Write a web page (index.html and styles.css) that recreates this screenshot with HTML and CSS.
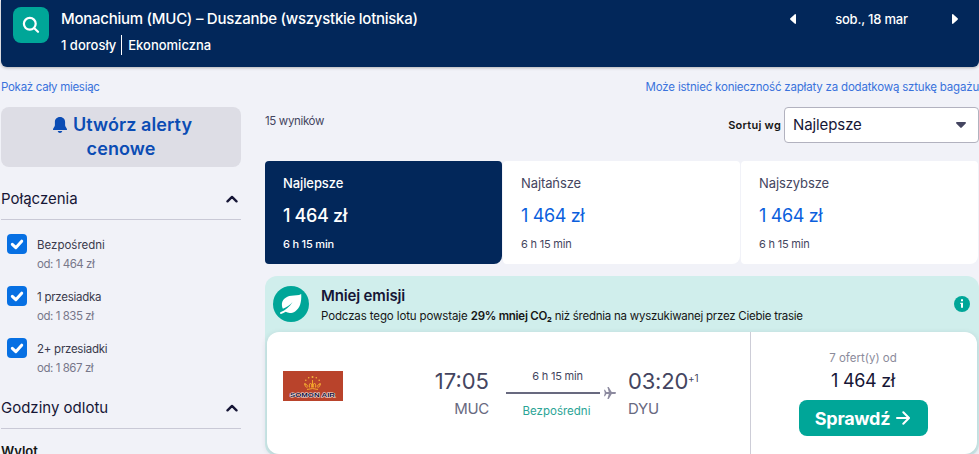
FILE: index.html
```html
<!DOCTYPE html>
<html lang="pl">
<head>
  <meta charset="UTF-8" />
  <title>Monachium – Duszanbe</title>
  <link rel="stylesheet" href="styles.css">
</head>
<body>
  <header class="search-bar">
    <button class="search-btn" aria-label="Szukaj">
      <svg width="18" height="18" viewBox="0 0 18 18" fill="none" stroke="#fff" stroke-width="2.2" stroke-linecap="round"><circle cx="7.8" cy="7.8" r="5.9"/><path d="M12.3 12.3L16 15.8"/></svg>
    </button>
    <div class="search-info">
      <div class="route">Monachium (MUC) – Duszanbe (wszystkie lotniska)</div>
      <div class="details"><span>1 dorosły</span><span class="cabin">Ekonomiczna</span></div>
    </div>
    <div class="date-nav">
      <svg width="6" height="10" viewBox="0 0 6 10" fill="#fff"><path d="M6 1v8c0 .8-.8 1.200-1.400.6L.4 5.700a1 1 0 0 1 0-1.400L4.600.4C5.200-.2 6 .2 6 1z"/></svg>
      <span class="date">sob., 18 mar</span>
      <svg width="6" height="10" viewBox="0 0 6 10" fill="#fff"><path d="M0 1v8c0 .8.8 1.200 1.400.6l4.200-3.900a1 1 0 0 0 0-1.400L1.400.4C.8-.2 0 .2 0 1z"/></svg>
    </div>
  </header>

  <div class="links">
    <a class="link-month">Pokaż cały miesiąc</a>
    <a class="link-bags">Może istnieć konieczność zapłaty za dodatkową sztukę bagażu</a>
  </div>

  <div class="content">
    <aside class="sidebar">
      <button class="alert-btn">
        <span class="alert-line"><svg width="14" height="16" viewBox="0 0 14 16" fill="#0b4cb4"><path d="M7 0C3.700 0 1.900 2.400 1.900 5v3.200c0 1.300-1.600 2.400-1.900 4.100-.1.500.2.700.6.700h12.800c.4 0 .7-.2.600-.7-.3-1.700-1.900-2.800-1.900-4.100V5c0-2.600-1.800-5-5.100-5zM4.700 14c.3 1.200 1.200 2 2.300 2s2-.8 2.300-2z"/></svg>Utwórz alerty</span>
        <span>cenowe</span>
      </button>

      <div class="filter-head first">
        <span>Połączenia</span>
        <svg width="12" height="8" viewBox="0 0 12 8" fill="none" stroke="#161636" stroke-width="2.400" stroke-linecap="round" stroke-linejoin="round"><path d="M1.500 6.300L6 1.900l4.500 4.400"/></svg>
      </div>
      <div class="options">
        <div class="option">
          <span class="check"><svg width="20" height="20" viewBox="0 0 20 20" fill="none" stroke="#fff" stroke-width="3" stroke-linecap="round" stroke-linejoin="round"><path d="M5.300 10.300l3.500 3.400 5.900-6.500"/></svg></span>
          <div><div class="opt-name">Bezpośredni</div><div class="opt-price">od: 1 464 zł</div></div>
        </div>
        <div class="option">
          <span class="check"><svg width="20" height="20" viewBox="0 0 20 20" fill="none" stroke="#fff" stroke-width="3" stroke-linecap="round" stroke-linejoin="round"><path d="M5.300 10.300l3.500 3.400 5.900-6.500"/></svg></span>
          <div><div class="opt-name tight">1 przesiadka</div><div class="opt-price">od: 1 835 zł</div></div>
        </div>
        <div class="option">
          <span class="check"><svg width="20" height="20" viewBox="0 0 20 20" fill="none" stroke="#fff" stroke-width="3" stroke-linecap="round" stroke-linejoin="round"><path d="M5.300 10.300l3.500 3.400 5.900-6.500"/></svg></span>
          <div><div class="opt-name tight">2+ przesiadki</div><div class="opt-price">od: 1 867 zł</div></div>
        </div>
      </div>
      <div class="filter-head">
        <span>Godziny odlotu</span>
        <svg width="12" height="8" viewBox="0 0 12 8" fill="none" stroke="#161636" stroke-width="2.400" stroke-linecap="round" stroke-linejoin="round"><path d="M1.500 6.300L6 1.900l4.500 4.400"/></svg>
      </div>
      <div class="subhead">Wylot</div>
    </aside>

    <main class="results">
      <div class="sort-row">
        <span class="count">15 wyników</span>
        <span class="sort-label">Sortuj wg</span>
        <div class="select">
          <span>Najlepsze</span>
          <svg width="10" height="6" viewBox="0 0 10 6" fill="#444560"><path d="M1 0h8c.9 0 1.300.8.700 1.400L5.700 5.600a1 1 0 0 1-1.400 0L.3 1.400C-.3.800.1 0 1 0z"/></svg>
        </div>
      </div>

      <div class="tabs">
        <div class="tab active"><div class="tab-name">Najlepsze</div><div class="tab-price">1 464 zł</div><div class="tab-time">6 h 15 min</div></div>
        <div class="tab"><div class="tab-name">Najtańsze</div><div class="tab-price">1 464 zł</div><div class="tab-time">6 h 15 min</div></div>
        <div class="tab"><div class="tab-name">Najszybsze</div><div class="tab-price">1 464 zł</div><div class="tab-time">6 h 15 min</div></div>
      </div>

      <section class="eco">
        <div class="eco-head">
          <svg width="36" height="36" viewBox="0 0 36 36"><circle cx="18" cy="18" r="18" fill="#00a698"/><path d="M28.200 8.100c-2.600 1.700-6.300 1.200-9.900 1.600C12.600 10.300 8.700 14 8.900 19c0 1.400.4 2.700 1 3.800 3.700-1.500 7-3.800 9.700-6.900-2.700 4.500-7 8.200-12.200 10.400-.7.500-.4 1.700.6 1.600 1.700-.4 3.200-1.200 4.700-2.100 2.400 1.600 6.300 1.500 9.400-.4 4.800-3 6.600-9 6.100-17.300z" fill="#fff"/></svg>
          <div class="eco-text">
            <div class="eco-title">Mniej emisji</div>
            <div class="eco-desc"><span>Podczas tego lotu powstaje </span><b>29% mniej CO₂</b><span class="tight"> niż średnia na wyszukiwanej przez Ciebie trasie</span></div>
          </div>
          <svg class="info" width="16" height="16" viewBox="0 0 16 16"><circle cx="8" cy="8" r="8" fill="#00a698"/><path d="M7 3.200h2v2H7zM6.300 6.800H9v5H7V8h-.7z" fill="#fff"/></svg>
        </div>
        <div class="ticket">
          <div class="flight">
            <div class="airline">
              <svg viewBox="0 0 60 30" width="60" height="30">
                <rect width="60" height="30" fill="#b9432b"/>
                <g fill="none" stroke="#f2a32b" stroke-width="1"><path d="M24 18.500q5.500-2 11 0M24.500 16.800q-3.500-1.500-2.500-4 2 .3 3 3M34.500 16.800q3.500-1.500 2.500-4-2 .3-3 3M26.500 16.500q-1-3 1-4.500 2 1.800 1 4.500M32.500 16.500q1-3-1-4.500-2 1.800-1 4.500M29.500 9v7.500"/></g>
                <g fill="#f5b53b"><circle cx="29.500" cy="6" r="1"/><circle cx="25.700" cy="6.800" r=".8"/><circle cx="33.300" cy="6.800" r=".8"/><circle cx="22.800" cy="9.300" r=".8"/><circle cx="36.200" cy="9.300" r=".8"/><circle cx="21.800" cy="13" r=".8"/><circle cx="37.200" cy="13" r=".8"/></g>
                <text class="logo-text" x="7" y="26" textLength="45" lengthAdjust="spacingAndGlyphs">SOMON AIR</text>
              </svg>
            </div>
            <div class="leg from"><div class="time">17:05</div><div class="code">MUC</div></div>
            <div class="path">
              <div class="duration">6 h 15 min</div>
              <div class="line-row"><span class="line"></span><svg width="12" height="12" viewBox="0 0 12 12" fill="#8c8a9f"><path d="M0 2.700h1l1.400 2.400h2.400L3.400 0h1.300l3 5.100h3.200c.6 0 1.100.4 1.100.9s-.5.900-1.100.9H7.700l-3 5.100H3.400l1.400-5.100H2.400L1 9.300H0L.8 6z"/></svg></div>
              <div class="direct">Bezpośredni</div>
            </div>
            <div class="leg to"><div class="time">03:20<span class="plus">+1</span></div><div class="code">DYU</div></div>
          </div>
          <div class="offer">
            <div class="offers">7 ofert(y) od</div>
            <div class="price">1 464 zł</div>
            <button class="go"><span>Sprawdź</span><svg width="14" height="14" viewBox="0 0 14 14" fill="none" stroke="#fff" stroke-width="2" stroke-linecap="round" stroke-linejoin="round"><path d="M1 7h11.500M7.300 1.200L13 7l-5.700 5.800"/></svg></button>
          </div>
        </div>
      </section>
    </main>
  </div>
</body>
</html>
```
FILE: styles.css
```css
* {
  box-sizing: border-box;
}
body {
  margin: 0;
  height: 454px;
  overflow: hidden;
  background: #f1f2f8;
  color: #161616;
  font-family: Inter, "Liberation Sans", sans-serif;
  font-size: 12px;
  line-height: 16px;
  white-space: nowrap;
}
button {
  border: 0;
  padding: 0;
  font-family: inherit;
}
svg {
  display: block;
  flex: none;
}
.search-bar {
  display: flex;
  height: 67px;
  margin-left: 1px;
  padding: 7px 21px 0 12px;
  background: #02275a;
  color: #fff;
  border-radius: 0 0 6px 6px;
  box-shadow: 0 1px 3px rgba(37, 32, 31, .3);
}
.search-btn {
  display: flex;
  align-items: center;
  justify-content: center;
  width: 36px;
  height: 36px;
  border-radius: 8px;
  background: #00a698;
}
.search-info {
  margin-left: 12px;
  font-weight: 500;
}
.route {
  font-size: 15px;
  line-height: 24px;
  letter-spacing: -.26px;
}
.details {
  display: flex;
  align-items: center;
  margin-top: 4px;
  font-size: 13px;
  line-height: 20px;
}
.cabin {
  margin-left: 5px;
  padding-left: 6px;
  border-left: 1px solid #fff;
}
.date-nav {
  display: flex;
  align-items: center;
  justify-content: space-between;
  width: 168px;
  height: 24px;
  margin-left: auto;
  font-size: 13px;
  font-weight: 500;
}
.date {
  letter-spacing: -.2px;
  margin-right: 5px;
}
.links {
  display: flex;
  justify-content: space-between;
  height: 40px;
  padding: 12px 0 0 1px;
  color: #3a72dc;
  font-size: 11.500px;
}
.link-month {
  letter-spacing: -.28px;
}
.link-bags {
  letter-spacing: -.19px;
}
.content {
  display: flex;
  gap: 24px;
  padding-left: 1px;
}
.sidebar {
  width: 240px;
  flex: none;
}
.alert-btn {
  display: flex;
  flex-direction: column;
  align-items: center;
  justify-content: center;
  width: 240px;
  height: 60px;
  border-radius: 8px;
  background: #dddde5;
  color: #0b4cb4;
  font-size: 18px;
  font-weight: 600;
  line-height: 24px;
  letter-spacing: .08px;
}
.alert-line {
  display: flex;
  align-items: center;
  gap: 6px;
  padding-left: 3px;
}
.filter-head {
  display: flex;
  align-items: center;
  justify-content: space-between;
  height: 42px;
  padding-right: 3px;
  border-bottom: 1px solid #c9c9d6;
  color: #161636;
  font-size: 15px;
}
.filter-head.first {
  margin-top: 11px;
}
.options {
  display: flex;
  flex-direction: column;
  gap: 12px;
  height: 167px;
  padding: 14px 0 0 6px;
}
.option {
  display: flex;
  gap: 10px;
  height: 40px;
}
.check {
  width: 20px;
  height: 20px;
  flex: none;
  border-radius: 4px;
  background: #0770e3;
}
.opt-name {
  margin-top: 2px;
  line-height: 18px;
  font-size: 11.500px;
  color: #3a3a4c;
}
.tight {
  letter-spacing: -.25px;
}
.opt-price {
  line-height: 20px;
  font-size: 11.500px;
  letter-spacing: -.45px;
  color: #77778a;
}
.subhead {
  margin-top: 12px;
  line-height: 20px;
  font-size: 13px;
  font-weight: 600;
}
.results {
  width: 714px;
}
.sort-row {
  display: flex;
  height: 36px;
  align-items: center;
}
.count {
  align-self: flex-start;
  margin-top: 6px;
  font-size: 11.500px;
  letter-spacing: -.35px;
  color: #444560;
}
.sort-label {
  margin-left: auto;
  margin-right: 3px;
  font-size: 11px;
  font-weight: 600;
  letter-spacing: .24px;
}
.select {
  display: flex;
  align-items: center;
  justify-content: space-between;
  width: 195px;
  height: 36px;
  padding: 0 12px 0 8px;
  border: 1px solid #b2b2bf;
  border-radius: 4px;
  background: #fff;
  color: #161636;
  font-size: 15px;
  letter-spacing: -.1px;
}
.tabs {
  display: grid;
  grid-template-columns: repeat(3, 237px);
  gap: 1px;
  margin-top: 18px;
}
.tab {
  height: 103px;
  padding: 12px 18px 0;
  border-radius: 4px 4px 8px 4px;
  background: #fff;
  color: #444560;
}
.tab-name {
  font-size: 13px;
  line-height: 20px;
  letter-spacing: -.1px;
}
.tab-price {
  margin-top: 11px;
  font-size: 18px;
  line-height: 24px;
  letter-spacing: -.35px;
  color: #0b5fdd;
}
.tab-time {
  margin-top: 8px;
  font-size: 11px;
  letter-spacing: -.2px;
}
.active,
.active .tab-price {
  color: #fff;
  font-weight: 500;
}
.active {
  background: #02275a;
}
.eco {
  margin-top: 12px;
  padding: 0 2px 2px;
  border-radius: 12px;
  background: #d0eeec;
}
.eco-head {
  display: flex;
  align-items: center;
  height: 56px;
  padding: 0 7px 0 6px;
}
.eco-text {
  margin-left: 12px;
  padding-top: 3px;
}
.eco-title {
  font-size: 15px;
  font-weight: 600;
  line-height: 20px;
  letter-spacing: -.15px;
  color: #161636;
}
.eco-desc {
  margin-top: 1px;
  font-size: 11.500px;
  line-height: 18px;
  letter-spacing: -.12px;
  white-space: pre;
}
.eco-desc b {
  font-weight: 600;
  letter-spacing: -.25px;
}
.info {
  margin-left: auto;
}
.ticket {
  display: flex;
  height: 122px;
  border-radius: 12px;
  background: #fff;
  box-shadow: 0 2px 6px rgba(37, 32, 60, .16);
}
.flight {
  display: flex;
  width: 483px;
  padding-left: 16px;
}
.airline {
  width: 60px;
  margin-top: 39px;
}
.logo-text {
  font: 900 6px "Liberation Sans", sans-serif;
  fill: #16113c;
  stroke: #f5e9e4;
  stroke-width: 1px;
  paint-order: stroke;
}
.leg {
  padding-top: 36px;
  color: #444560;
}
.from {
  width: 146px;
  text-align: right;
}
.time {
  font-size: 22px;
  line-height: 26px;
}
.to .time {
  letter-spacing: -.2px;
}
.code {
  margin-top: 5px;
  font-size: 15px;
  line-height: 20px;
  letter-spacing: -.3px;
  color: #68697f;
}
.path {
  width: 110px;
  margin: 36px 12px 0 17px;
}
.duration,
.direct {
  width: 101px;
  text-align: center;
}
.duration {
  padding-left: 2px;
  font-size: 11px;
  letter-spacing: -.2px;
  color: #444560;
}
.direct {
  margin-top: 4px;
  font-size: 11.500px;
  color: #2ba496;
}
.line-row {
  display: flex;
  align-items: center;
  gap: 4px;
  height: 12px;
  margin-top: 3px;
}
.line {
  width: 94px;
  height: 2px;
  background: #68697f;
}
.plus {
  font-size: 10px;
  vertical-align: 7px;
  line-height: 10px;
}
.offer {
  flex: 1;
  display: flex;
  flex-direction: column;
  align-items: center;
  padding: 18px 2px 0 0;
  border-left: 1px solid #cdcdd7;
}
.offers {
  font-size: 11.500px;
  color: #8b8b9b;
}
.price {
  margin-top: 3px;
  font-size: 18px;
  line-height: 24px;
  letter-spacing: -.3px;
  color: #161636;
}
.go {
  display: flex;
  align-items: center;
  justify-content: center;
  gap: 6px;
  width: 129px;
  height: 36px;
  margin-top: 7px;
  padding-right: 1px;
  border-radius: 8px;
  background: #00a698;
  color: #fff;
  font-size: 18px;
  font-weight: 700;
  letter-spacing: -.3px;
}
```
